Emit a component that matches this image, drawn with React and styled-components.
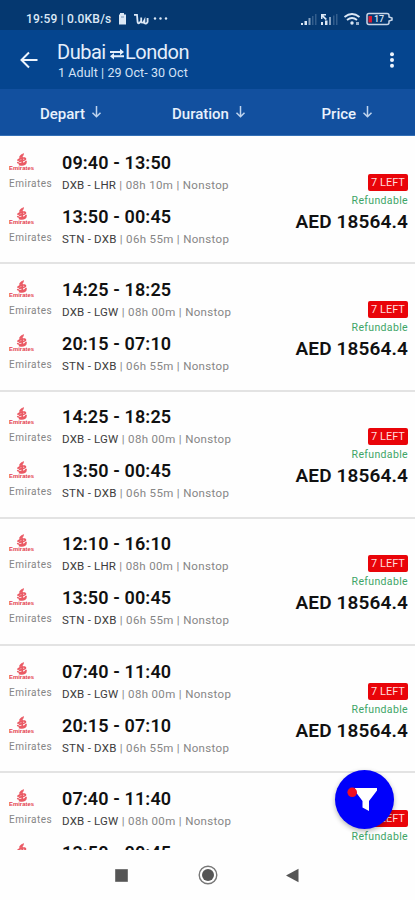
import React from 'react';
import styled, { createGlobalStyle } from 'styled-components';

const GlobalStyle = createGlobalStyle`
  * {
    box-sizing: border-box;
  }
  body {
    margin: 0;
    background-color: #fefefe;
    font-family: Roboto, sans-serif;
  }
`;

const Screen = styled.div`
  display: flex;
  flex-direction: column;
  position: relative;
  width: 415px;
  height: 900px;
  overflow: hidden;
  background-color: #fefefe;
`;

const StatusBar = styled.div`
  display: flex;
  align-items: center;
  flex: none;
  height: 30px;
  padding: 8px 22px 0 26px;
  background-color: #053870;
  color: #dce8f6;
`;

const StatusText = styled.span`
  width: 87px;
  font-size: 12px;
  font-weight: 500;
  letter-spacing: 0.2px;
  line-height: 16px;
  white-space: nowrap;
`;

const StatusIcons = styled.div`
  display: flex;
  margin-left: ${(props) => (props.$right ? 'auto' : '4px')};
`;

const Header = styled.div`
  display: flex;
  flex: none;
  height: 59px;
  padding: 0 17px 0 19px;
  background-color: #05458f;
  color: #e4eefb;
`;

const BackButton = styled.button`
  width: 39px;
  padding: 0;
  border: 0;
  background: none;
  text-align: left;
  line-height: 0;
`;

const HeaderText = styled.div`
  padding-top: 10px;
`;

const Title = styled.h1`
  display: flex;
  align-items: center;
  margin: 0 0 0 -1px;
  font-size: 20px;
  font-weight: 400;
  line-height: 24px;
  letter-spacing: -0.5px;

  svg {
    margin: 4px 1px 0 0;
  }
`;

const Subtitle = styled.div`
  font-size: 12.5px;
  line-height: 18px;
  letter-spacing: 0.08px;
  color: #d3e2f6;
`;

const MenuButton = styled.button`
  margin-left: auto;
  padding: 0;
  border: 0;
  background: none;
  line-height: 0;
`;

const SortBar = styled.div`
  display: grid;
  grid-template-columns: 132px 153px 130px;
  flex: none;
  height: 47px;
  padding-left: 1px;
  background-color: #12509f;
  border-bottom: 1px solid #3470b6;
`;

const SortButton = styled.button`
  display: flex;
  align-items: center;
  padding: 3px 0 0 ${(props) => props.$inset}px;
  border: 0;
  background: none;
  color: #e8f1fc;
  font-family: inherit;
  font-size: 15px;
  font-weight: 500;

  svg {
    margin: -4px 0 0 6px;
  }
`;

const Results = styled.div`
  flex: none;
  height: 714px;
  padding-top: 1px;
  overflow: hidden;
`;

const Row = styled.div`
  display: flex;
  justify-content: space-between;
  height: 127.3px;
  padding: 13.6px 7px 0 9px;
  border-bottom: 2px solid #e3e3e3;
`;

const Leg = styled.div`
  display: flex;
  height: 54px;
`;

const Airline = styled.div`
  width: 53px;
  color: #858585;
  font-size: 10px;
  line-height: 14px;
  letter-spacing: 0.5px;

  svg {
    display: block;
    margin: 2px 0 2px;
  }
`;

const Times = styled.div`
  color: #111;
  font-size: 18px;
  font-weight: 600;
  line-height: 24px;
  letter-spacing: 0.12px;
  white-space: nowrap;
`;

const Details = styled.div`
  color: #868686;
  font-size: 11.5px;
  line-height: 21px;
  letter-spacing: 0.34px;
  white-space: nowrap;
`;

const Airports = styled.span`
  color: #3c3c3c;
  letter-spacing: 0.22px;
`;

const Fare = styled.div`
  display: flex;
  flex-direction: column;
  align-items: flex-end;
  padding-top: 23px;
`;

const SeatsBadge = styled.div`
  width: 40px;
  height: 17px;
  border-radius: 2px;
  background-color: #e90409;
  color: #ffdcdc;
  font-size: 11px;
  line-height: 17px;
  text-align: center;
`;

const Refund = styled.div`
  color: #3da566;
  font-size: 10.5px;
  line-height: 19px;
  letter-spacing: 0.35px;
`;

const Price = styled.div`
  color: #111;
  font-size: 19px;
  font-weight: 600;
  line-height: 23px;
  letter-spacing: 0.13px;
`;

const FilterButton = styled.button`
  position: absolute;
  left: 335px;
  top: 770px;
  width: 59px;
  height: 59px;
  padding: 0;
  border: 0;
  border-radius: 50%;
  background-color: #0000fb;
  box-shadow: 0 2px 5px rgba(0, 0, 0, 0.3);
  line-height: 0;
`;

const NavBar = styled.div`
  display: flex;
  align-items: center;
  flex: 1;
  padding: 0 115px 0 114px;
  justify-content: space-between;
  background-color: #fefefe;
`;

const early = ['14:25 - 18:25', 'DXB - LGW', '08h 00m'];
const evening = ['20:15 - 07:10', 'STN - DXB', '06h 55m'];
const midday = ['13:50 - 00:45', 'STN - DXB', '06h 55m'];
const morning = ['07:40 - 11:40', 'DXB - LGW', '08h 00m'];

const flights = [
  [['09:40 - 13:50', 'DXB - LHR', '08h 10m'], midday],
  [early, evening],
  [early, midday],
  [['12:10 - 16:10', 'DXB - LHR', '08h 00m'], midday],
  [morning, evening],
  [morning, midday],
];

function EmiratesLogo() {
  return (
    <svg width="27" height="22" viewBox="0 0 27 22">
      <g fill="none" stroke="#ea5a64" strokeLinecap="round">
        <path d="M14.3 1c-2.4.5-4 2-3.6 3.7 1.8.2 3.5-1.1 3.6-3.7z" fill="#ea5a64" strokeWidth="0.8" />
        <path d="M9 7.2c2.3-2.3 7.5-3 7.5-1.2 0 1.3-4 1.7-6 2.2" strokeWidth="1.7" />
        <path d="M8.7 9.6c2.5 1.6 7.3 1.4 8.4-1.2M10.5 11.6c2.6.6 5.5.3 6.5-1.9M13.2 4.8v6.5" strokeWidth="1.6" />
      </g>
      <text
        x="0"
        y="17.4"
        textLength="25"
        lengthAdjust="spacingAndGlyphs"
        fill="#e4404d"
        fontFamily="Liberation Sans, sans-serif"
        fontSize="6"
        fontWeight="700"
        letterSpacing="0"
      >
        Emirates
      </text>
    </svg>
  );
}

function DownArrow() {
  return (
    <svg width="11" height="13" viewBox="0 0 11 13" fill="none" stroke="#bfd4ee" strokeWidth="1.5">
      <path d="M5.5 1v10.5M1.5 7.7l4 4 4-4" />
    </svg>
  );
}

function FlightLeg({ leg }) {
  return (
    <Leg>
      <Airline>
        <EmiratesLogo />
        Emirates
      </Airline>
      <div>
        <Times>{leg[0]}</Times>
        <Details>
          <Airports>{leg[1]}</Airports> | {leg[2]} | Nonstop
        </Details>
      </div>
    </Leg>
  );
}

function Status() {
  return (
    <StatusBar>
      <StatusText>19:59 | 0.0KB/s</StatusText>
      <StatusIcons>
        <svg width="52" height="14" viewBox="0 0 52 14">
          <path d="M3 1h4v1.5h2V12.5H2V2.5h1z" fill="#dce8f6" />
          <path d="M4 5h3" stroke="#7796ba" />
          <path d="M17 2.8h3l.6 7.2q.4 2 2 .8l1.6-2V5.5v4q.6 2 2.2.6l1-1.8v3q2.2 1 3.2-1.5V6" fill="none" stroke="#dce8f6" strokeWidth="1.8" />
          <g fill="#dce8f6">
            <circle cx="38" cy="6.5" r="1.2" />
            <circle cx="43.5" cy="6.5" r="1.2" />
            <circle cx="49" cy="6.5" r="1.2" />
          </g>
        </svg>
      </StatusIcons>
      <StatusIcons $right>
        <svg width="92" height="14" viewBox="0 0 92 14">
          <g fill="#dce8f6">
            <path d="M0 11h2v2H0zM3.5 9h2.5v4H3.5zM20 10h2v3h-2zM24 8.5h2.5v4.5H24z" />
            <path d="M7.5 6h2v7h-2zM28 5h2v8h-2z" opacity=".6" />
            <path d="M11 4h1.5v9H11zM14 2h1.5v11H14zM32 3.5h1.5V13H32zM35 2h1.5v11H35z" opacity=".22" />
            <path d="M20 2h5v1.5h-2.5L26 7l-1.5 1L21.5 5v2H20z" />
            <circle cx="51" cy="11" r="1.7" />
            <path d="M55 10h3v3h-3z" opacity=".7" />
          </g>
          <path d="M43.5 5q7.5-6 15 0M46 8q5-4 10 0" fill="none" stroke="#dce8f6" strokeWidth="1.8" />
          <path d="M67 2h18q2 0 2 2v1.5l3 1v2l-3 1V11q0 2-2 2H67q-2 0-2-2V4q0-2 2-2z" transform="translate(1 -.5)" fill="none" stroke="#c8d7e9" strokeWidth="1.5" />
          <path d="M67.5 4h3.5v6.5h-3.5z" fill="#d71930" />
          <text x="73" y="10.3" fontSize="9" fontWeight="500" fill="#dce8f6" fontFamily="Roboto, sans-serif">17</text>
        </svg>
      </StatusIcons>
    </StatusBar>
  );
}

export default function App() {
  return (
    <>
      <GlobalStyle />
      <Screen>
        <Status />
        <Header>
          <BackButton aria-label="Back">
            <svg width="20" height="20" viewBox="0 0 20 20" fill="none" stroke="#edf4fd" strokeWidth="2">
              <path d="M18.5 10H3M10 2.5L2.5 10l7.5 7.5" />
            </svg>
          </BackButton>
          <HeaderText>
            <Title>
              Dubai&nbsp;
              <svg width="14" height="12" viewBox="0 0 14 12" fill="none" stroke="#e4eefb" strokeWidth="1.9">
                <path d="M0 4h12M2 8.3h12" />
                <path d="M10 .8L14 4l-4 3.2zM4 5.1L0 8.3l4 3.2z" fill="#e4eefb" stroke="none" />
              </svg>
              London
            </Title>
            <Subtitle>1 Adult | 29 Oct- 30 Oct</Subtitle>
          </HeaderText>
          <MenuButton aria-label="More">
            <svg width="12" height="18" viewBox="0 0 12 18" fill="#edf4fd">
              <circle cx="6" cy="3.2" r="2" />
              <circle cx="6" cy="9" r="2" />
              <circle cx="6" cy="14.8" r="2" />
            </svg>
          </MenuButton>
        </Header>
        <SortBar>
          <SortButton $inset={39}>Depart <DownArrow /></SortButton>
          <SortButton $inset={39}>Duration <DownArrow /></SortButton>
          <SortButton $inset={35.5}>Price <DownArrow /></SortButton>
        </SortBar>
        <Results>
          {flights.map((legs, i) => (
            <Row key={i}>
              <div>
                <FlightLeg leg={legs[0]} />
                <FlightLeg leg={legs[1]} />
              </div>
              <Fare>
                <SeatsBadge>7 LEFT</SeatsBadge>
                <Refund>Refundable</Refund>
                <Price>AED 18564.4</Price>
              </Fare>
            </Row>
          ))}
        </Results>
        <NavBar>
          <svg width="15" height="15" viewBox="0 0 15 15">
            <path d="M1.5 1.5h12v12h-12z" fill="#555" stroke="#777" />
          </svg>
          <svg width="20" height="20" viewBox="0 0 20 20">
            <circle cx="10" cy="10" r="8.8" fill="none" stroke="#777" strokeWidth="1.4" />
            <circle cx="10" cy="10" r="6" fill="#555" />
          </svg>
          <svg width="14" height="15" viewBox="0 0 14 15">
            <path d="M0 7.5L12.5 .8v13.4z" fill="#555" />
          </svg>
        </NavBar>
        <FilterButton aria-label="Filter">
          <svg width="59" height="59" viewBox="0 0 59 59">
            <path d="M20 18h22v2.5L34 31v10l-6.5-3.5V31L20 21z" fill="#fff" />
            <circle cx="17.2" cy="22.3" r="4.8" fill="#f20d20" />
          </svg>
        </FilterButton>
      </Screen>
    </>
  );
}
